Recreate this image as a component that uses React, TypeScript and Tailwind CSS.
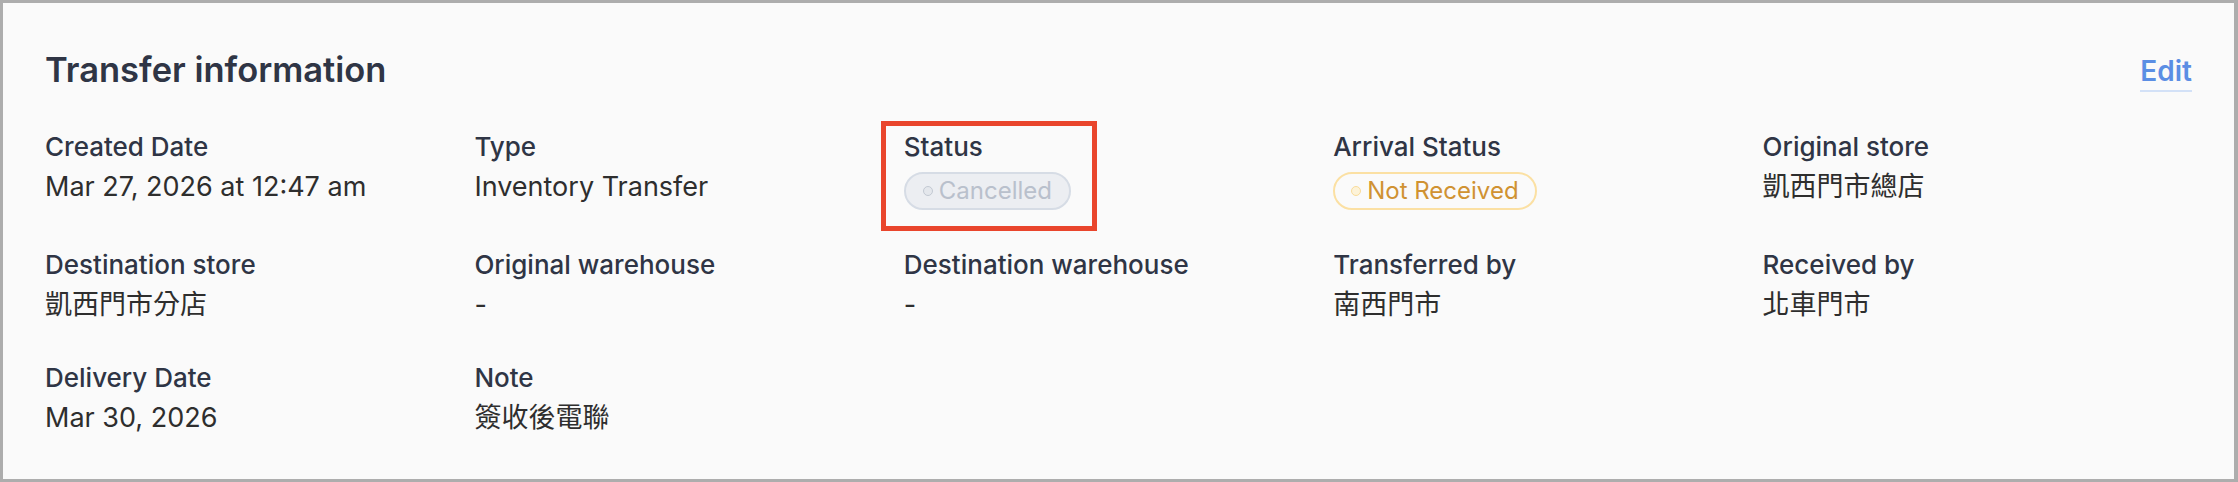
import React from 'react';

type Field = {
  label: string;
  value?: string;
  badge?: 'cancelled' | 'notReceived';
  highlight?: boolean;
};

const fields: Field[] = [
  { label: 'Created Date', value: 'Mar 27, 2026 at 12:47 am' },
  { label: 'Type', value: 'Inventory Transfer' },
  { label: 'Status', badge: 'cancelled', highlight: true },
  { label: 'Arrival Status', badge: 'notReceived' },
  { label: 'Original store', value: '凱西門市總店' },
  { label: 'Destination store', value: '凱西門市分店' },
  { label: 'Original warehouse', value: '-' },
  { label: 'Destination warehouse', value: '-' },
  { label: 'Transferred by', value: '南西門市' },
  { label: 'Received by', value: '北車門市' },
  { label: 'Delivery Date', value: 'Mar 30, 2026' },
  { label: 'Note', value: '簽收後電聯' },
];

const StatusBadge: React.FC<{ kind: 'cancelled' | 'notReceived' }> = ({ kind }) => {
  if (kind === 'cancelled') {
    return (
      <span className="mt-[7px] inline-flex h-[38px] items-center gap-[6px] rounded-full border-2 border-[#d6dce5] bg-[#eceef2] pl-[17px] pr-[17px] text-[24px] text-[#b9c0cc]">
        <span className="h-[10px] w-[10px] rounded-full border-[1.5px] border-[#c3c9d3] bg-[#e4e7ec]" />
        Cancelled
      </span>
    );
  }
  return (
    <span className="mt-[7px] inline-flex h-[38px] items-center gap-[6px] rounded-full border-2 border-[#fbe0a3] pl-[16px] pr-[16px] text-[24px] text-[#d09232]">
      <span className="h-[10px] w-[10px] rounded-full border-[1.5px] border-[#f9dc9a] bg-[#fdf3d8]" />
      Not Received
    </span>
  );
};

export default function App() {
  return (
    <div
      className="h-[482px] w-[2238px] bg-white"
      style={{ fontFamily: 'Inter, "Noto Sans CJK TC", sans-serif' }}
    >
      <div className="h-full border-[3px] border-r-4 border-[#adadad] bg-[#fafafa] px-[42px] pt-[42px]">
        {/* Header */}
        <div className="flex items-center justify-between">
          <h2 className="text-[34.5px] font-semibold leading-[50px] text-[#2f3545]">
            Transfer information
          </h2>
          <button className="mt-[5px] border-b-2 border-[#d3e1f7] pb-[2px] text-[28px] font-semibold leading-[34px] text-[#5b8ee4]">
            Edit
          </button>
        </div>

        {/* Fields */}
        <div className="mt-[34px] grid grid-cols-5 gap-y-[37px]">
          {fields.map((f) => (
            <div key={f.label} className="relative flex flex-col items-start">
              {f.highlight && (
                <div className="pointer-events-none absolute left-[-23px] top-[-8px] h-[110px] w-[216px] border-[5px] border-[#e9452c]" />
              )}
              <div className="text-[26px] font-medium leading-[36px] text-[#2f3545]">{f.label}</div>
              {f.badge ? (
                <StatusBadge kind={f.badge} />
              ) : (
                <div className="mt-[4px] text-[27px] leading-[36px] text-[#2e2e2e]">{f.value}</div>
              )}
            </div>
          ))}
        </div>
      </div>
    </div>
  );
}
